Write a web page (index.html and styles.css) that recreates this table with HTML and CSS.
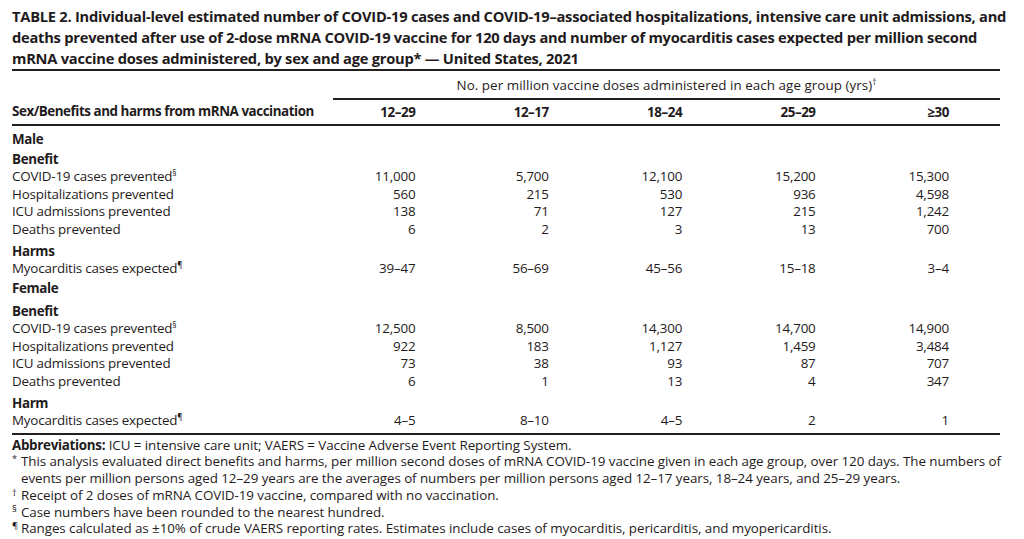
FILE: index.html
```html
<!DOCTYPE html>
<html lang="en">
<head>
<meta charset="utf-8">
<title>Table 2</title>
<link rel="stylesheet" href="styles.css">
</head>
<body>
<div class="page">
  <h1 class="title">TABLE 2. Individual-level estimated number of COVID-19 cases and COVID-19–associated hospitalizations, intensive care unit admissions, and<br>deaths prevented after use of 2-dose mRNA COVID-19 vaccine for 120 days and number of myocarditis cases expected per million second<br>mRNA vaccine doses administered, by sex and age group* — United States, 2021</h1>
  <table class="data">
    <colgroup>
      <col class="c-label">
      <col class="c-num"><col class="c-num"><col class="c-num"><col class="c-num"><col class="c-num">
    </colgroup>
    <thead>
      <tr class="h1row">
        <th class="blank"></th>
        <th colspan="5" class="span">No. per million vaccine doses administered in each age group (yrs)<sup>†</sup></th>
      </tr>
      <tr class="h2row">
        <th class="lab">Sex/Benefits and harms from mRNA vaccination</th>
        <th class="num">12–29</th>
        <th class="num">12–17</th>
        <th class="num">18–24</th>
        <th class="num">25–29</th>
        <th class="num">≥30</th>
      </tr>
    </thead>
    <tbody>
      <tr class="sex first"><td colspan="6">Male</td></tr>
      <tr class="cat cat-a"><td colspan="6">Benefit</td></tr>
      <tr><td class="lab">COVID-19 cases prevented<sup>§</sup></td><td class="num">11,000</td><td class="num">5,700</td><td class="num">12,100</td><td class="num">15,200</td><td class="num">15,300</td></tr>
      <tr><td class="lab">Hospitalizations prevented</td><td class="num">560</td><td class="num">215</td><td class="num">530</td><td class="num">936</td><td class="num">4,598</td></tr>
      <tr><td class="lab">ICU admissions prevented</td><td class="num">138</td><td class="num">71</td><td class="num">127</td><td class="num">215</td><td class="num">1,242</td></tr>
      <tr><td class="lab">Deaths prevented</td><td class="num">6</td><td class="num">2</td><td class="num">3</td><td class="num">13</td><td class="num">700</td></tr>
      <tr class="cat cat-h"><td colspan="6">Harms</td></tr>
      <tr><td class="lab">Myocarditis cases expected<sup>¶</sup></td><td class="num">39–47</td><td class="num">56–69</td><td class="num">45–56</td><td class="num">15–18</td><td class="num">3–4</td></tr>
      <tr class="sex second"><td colspan="6">Female</td></tr>
      <tr class="cat cat-b"><td colspan="6">Benefit</td></tr>
      <tr><td class="lab">COVID-19 cases prevented<sup>§</sup></td><td class="num">12,500</td><td class="num">8,500</td><td class="num">14,300</td><td class="num">14,700</td><td class="num">14,900</td></tr>
      <tr><td class="lab">Hospitalizations prevented</td><td class="num">922</td><td class="num">183</td><td class="num">1,127</td><td class="num">1,459</td><td class="num">3,484</td></tr>
      <tr><td class="lab">ICU admissions prevented</td><td class="num">73</td><td class="num">38</td><td class="num">93</td><td class="num">87</td><td class="num">707</td></tr>
      <tr><td class="lab">Deaths prevented</td><td class="num">6</td><td class="num">1</td><td class="num">13</td><td class="num">4</td><td class="num">347</td></tr>
      <tr class="cat cat-h"><td colspan="6">Harm</td></tr>
      <tr class="last"><td class="lab">Myocarditis cases expected<sup>¶</sup></td><td class="num">4–5</td><td class="num">8–10</td><td class="num">4–5</td><td class="num">2</td><td class="num">1</td></tr>
    </tbody>
  </table>
  <div class="notes">
    <p><b>Abbreviations:</b> ICU = intensive care unit; VAERS = Vaccine Adverse Event Reporting System.</p>
    <p class="fn"><sup class="mk">*</sup>This analysis evaluated direct benefits and harms, per million second doses of mRNA COVID-19 vaccine given in each age group, over 120 days. The numbers of<br>events per million persons aged 12–29 years are the averages of numbers per million persons aged 12–17 years, 18–24 years, and 25–29 years.</p>
    <p class="fn"><sup class="mk">†</sup>Receipt of 2 doses of mRNA COVID-19 vaccine, compared with no vaccination.</p>
    <p class="fn"><sup class="mk">§</sup>Case numbers have been rounded to the nearest hundred.</p>
    <p class="fn"><sup class="mk">¶</sup>Ranges calculated as ±10% of crude VAERS reporting rates. Estimates include cases of myocarditis, pericarditis, and myopericarditis.</p>
  </div>
</div>
</body>
</html>
```
FILE: styles.css
```css
html, body {
  margin: 0;
  padding: 0;
  background: #ffffff;
}
body {
  font-family: "Open Sans", "Liberation Sans", sans-serif;
  color: #1f1b1c;
}
.page {
  width: 988px;
  padding: 0 24px 0 12px;
}
.title {
  margin: 0;
  padding-top: 6px;
  font-size: 14.7px;
  line-height: 21px;
  font-weight: 700;
  letter-spacing: -0.25px;
  border-bottom: 2px solid #231f20;
  white-space: nowrap;
}
.data {
  width: 988px;
  border-collapse: collapse;
  table-layout: fixed;
  font-size: 13.4px;
  letter-spacing: -0.2px;
}
.c-label { width: 321px; }
.c-num { width: 133.4px; }
.data th, .data td {
  padding: 0;
  line-height: 17.5px;
  white-space: nowrap;
}
.data th { font-weight: 700; letter-spacing: -0.45px; }
.data .num {
  text-align: right;
  padding-right: 51px;
}
.data .lab { text-align: left; }
.h1row th { padding-top: 6px; padding-bottom: 3px; }
.h1row .span {
  text-align: center;
  font-weight: 400;
  letter-spacing: 0.05px;
  border-bottom: 2px solid #231f20;
}
.h2row th {
  padding-top: 4px;
  padding-bottom: 3px;
  border-bottom: 2px solid #231f20;
}
.sex td, .cat td { font-weight: 700; letter-spacing: -0.35px; }
.sex.first td { padding-top: 4.5px; }
.sex.second td { padding-top: 2px; }
.cat-a td { padding-top: 2.5px; }
.cat-b td { padding-top: 5.5px; }
.cat-h td { padding-top: 4.5px; }
.last td {
  padding-bottom: 3px;
  border-bottom: 2px solid #231f20;
}
sup {
  font-size: 0.62em;
  line-height: 0;
  vertical-align: 0.55em;
}
.notes {
  padding-top: 2px;
  font-size: 13.4px;
  letter-spacing: -0.07px;
  line-height: 16.8px;
}
.notes p { margin: 0; white-space: nowrap; }
.notes b { letter-spacing: -0.3px; }
.fn {
  padding-left: 9px;
  text-indent: -9px;
}
.mk {
  display: inline-block;
  width: 9px;
  text-indent: 0;
  font-size: 0.7em;
  vertical-align: 0.45em;
}
```
